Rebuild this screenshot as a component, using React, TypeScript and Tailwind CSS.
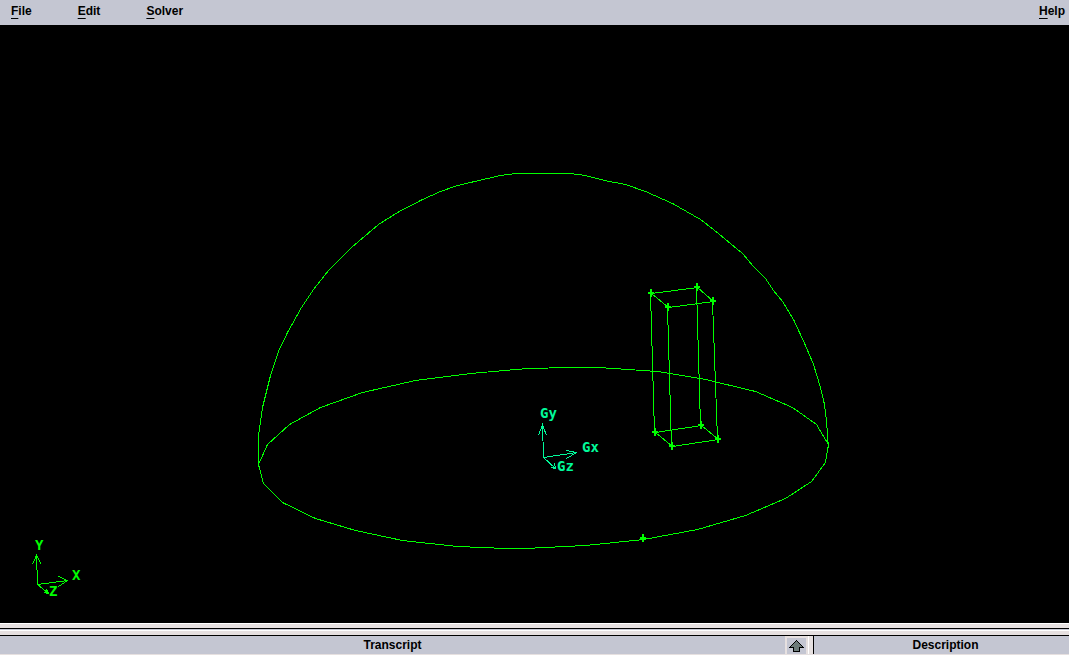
type Point = [number, number];

const menus = ['File', 'Edit', 'Solver'];

const dome: Point[] = [
    [258, 464], [258, 435], [262, 407], [270, 375], [278, 351], [287, 332],
    [301, 307], [313, 289], [328, 270], [334, 264], [351, 247], [378, 224],
    [397, 212], [422, 199], [440, 191], [457, 185], [500, 175], [516, 173],
    [570, 173], [585, 175], [604, 180], [625, 184], [645, 191], [672, 203],
    [700, 219], [713, 229], [742, 253], [753, 266], [765, 278], [773, 290],
    [782, 301], [793, 319], [805, 345], [813, 364], [820, 387], [824, 404],
    [826, 420], [828, 448],
];

const base: Point[] = [
    [258, 464], [267, 444], [289, 424], [320, 407], [362, 392], [415, 380],
    [470, 373], [527, 368], [570, 367], [598, 367], [657, 371], [705, 379],
    [755, 391], [792, 407], [816, 424], [828, 444], [825, 462], [811, 481],
    [785, 498], [745, 515], [697, 529], [643, 539], [585, 545], [525, 548],
    [506, 548], [457, 546], [402, 540], [355, 530], [315, 518], [282, 502],
    [263, 483], [258, 464],
];

const boxTop: Point[] = [[651, 293], [697, 287], [713, 301], [668, 307]];
const boxBottom: Point[] = [[655, 432], [701, 425], [718, 439], [672, 446]];
const seam: Point = [643, 538];

const toPoints = (points: Point[]) => points.map((p) => p.join(',')).join(' ');

function Marker({ at: [x, y] }: { at: Point }) {
    return <path d={`M${x - 1} ${y - 4}h2v8h-2zM${x - 3} ${y - 1}h6v2h-6z`} fill="currentColor" stroke="none" />;
}

function Viewport() {
    return (
        <svg
            viewBox="0 25 1069 598"
            className="block h-full w-full text-[#00ff00]"
            fill="none"
            stroke="currentColor"
            shapeRendering="crispEdges"
            role="img"
            aria-label="Model view"
        >
            <g transform="translate(0.5 0.5)">
                <polyline points={toPoints(dome)} />
                <polyline points={toPoints(base)} />
                <polygon points={toPoints(boxTop)} />
                <polygon points={toPoints(boxBottom)} />
                {boxTop.map(([x, y], i) => (
                    <line key={i} x1={x - 1} y1={y} x2={boxBottom[i][0] - 1} y2={boxBottom[i][1]} />
                ))}
                {/* View axes */}
                <path d="M37 584L36 555M32 564L36 555L41 564M37 584L67 580M58 576L67 580L58 586M37 584L48 593M46 589L48 593L44 592" />
                {/* Global axes */}
                <path
                    className="text-[#00fa9a]"
                    stroke="currentColor"
                    d="M543 457L542 424M538 435L542 424L546 435M543 457L576 452M566 450L576 452L566 458M543 457L555 468M554 463L555 468L551 467"
                />
            </g>
            {[...boxTop, ...boxBottom, seam].map((p, i) => (
                <Marker key={i} at={p} />
            ))}
            <g
                className="font-['DejaVu_Sans_Mono',monospace] text-[14px] font-bold"
                fill="currentColor"
                stroke="none"
            >
                <text x="35" y="550">Y</text>
                <text x="72" y="580">X</text>
                <text x="49" y="596">Z</text>
                <g className="text-[#00fa9a]" fill="currentColor">
                    <text x="540" y="418">Gy</text>
                    <text x="582" y="452">Gx</text>
                    <text x="557" y="471">Gz</text>
                </g>
            </g>
        </svg>
    );
}

function MenuButton({ label }: { label: string }) {
    return (
        <button type="button" className="leading-4">
            <span className="underline decoration-1 underline-offset-[3px]">{label[0]}</span>
            {label.slice(1)}
        </button>
    );
}

function App() {
    return (
        <div className="flex h-screen w-full flex-col overflow-hidden bg-[#c4c6d2] font-['Liberation_Sans',Arial,sans-serif] text-[12px] font-bold text-black">
            <nav className="flex h-[25px] shrink-0 items-center gap-[46px] pr-1 pb-1 pl-[11px]">
                {menus.map((label) => (
                    <MenuButton key={label} label={label} />
                ))}
                <div className="ml-auto flex">
                    <MenuButton label="Help" />
                </div>
            </nav>

            <main className="min-h-0 flex-1 bg-black">
                <Viewport />
            </main>

            {/* Sash between the model view and the lower panels */}
            <div className="shrink-0">
                <div className="h-[6px] border-t border-b border-t-white border-b-black bg-[#e6e0e0]" />
                <div className="h-px bg-[#c4c6d2]" />
                <div className="h-[6px] border-t border-b border-t-white border-b-black bg-[#e6e0e0]" />
            </div>

            <footer className="grid h-[19px] shrink-0 grid-cols-[785fr_23px_6px_255fr] border-b border-[#e6e0e0]">
                <h2 className="flex items-center justify-center">Transcript</h2>
                <button
                    type="button"
                    aria-label="Expand transcript"
                    className="flex items-start justify-center border-2 border-b-0 border-[#e6e0e0] pt-px"
                >
                    <svg width="15" height="13" viewBox="0 0 15 13" shapeRendering="crispEdges">
                        <path d="M7 1h1v1h1v1h1v1h1v1h1v1h1v1h1v1h1v1h-4v4h-7v-4h-4v-1h1v-1h1v-1h1v-1h1v-1h1v-1h1v-1h1z" fill="#000" />
                        <path d="M7 2h1v1h1v1h1v1h1v1h1v1h1v1h-3v4h-5v-4h-3v-1h1v-1h1v-1h1v-1h1v-1h1z" fill="#6c7a78" />
                    </svg>
                </button>
                <div className="border-r border-l border-r-black border-l-white bg-[#e6e0e0]" />
                <h2 className="flex items-center justify-center pl-2">Description</h2>
            </footer>
        </div>
    );
}

export default App;
